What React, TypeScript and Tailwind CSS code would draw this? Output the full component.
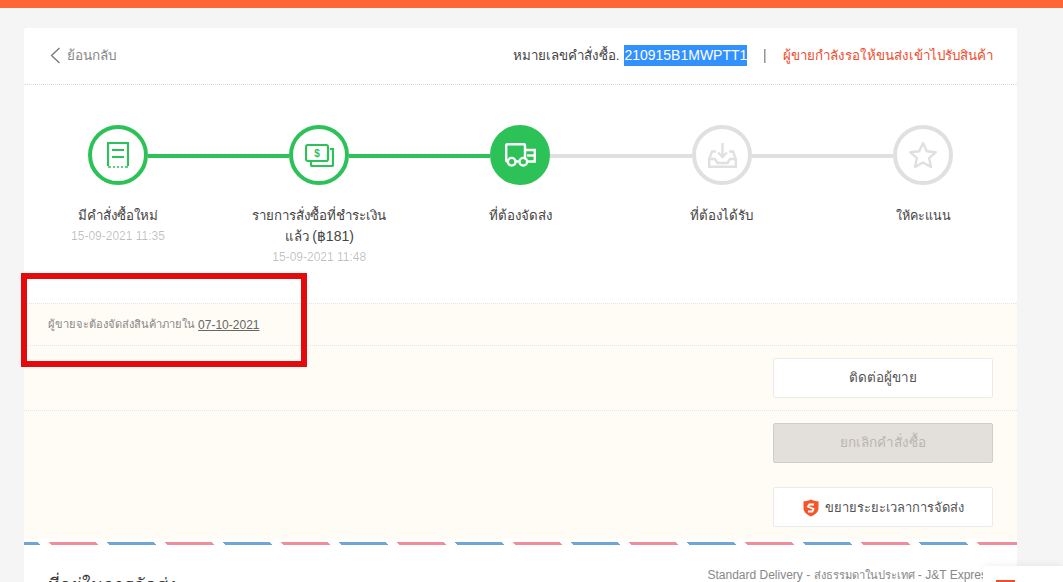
const FONT = "font-['Liberation_Sans','Noto_Sans','DejaVu_Sans',sans-serif]";

const ReceiptIcon = () => (
  <svg width="22" height="26" viewBox="0 0 22 26" fill="none" stroke="#2dc258" strokeWidth="2.200">
    <path d="M1 24V1h20v23" />
    <path d="M1 25h3M6 25h2M10 25h2M14 25h2M18 25h3" strokeWidth="1.600" />
    <path d="M5 8h12M5 15h12" strokeWidth="2.200" />
  </svg>
);

const MoneyIcon = () => (
  <svg width="29" height="23" viewBox="0 0 29 23" fill="none" stroke="#2dc258" strokeWidth="2.200">
    <rect x="1" y="1" width="22" height="16" rx="2" />
    <path d="M25 5h3v16a1 1 0 0 1-1 1H7a1 1 0 0 1-1-1v-3" />
    <text x="12" y="13" fontSize="10" fontWeight="700" fill="#2dc258" stroke="none" textAnchor="middle" fontFamily="Liberation Sans">$</text>
  </svg>
);

const TruckIcon = () => (
  <svg width="31" height="24" viewBox="0 0 31 24" fill="none" stroke="#fff" strokeWidth="2.400">
    <path d="M3 18.500H2.200a1 1 0 0 1-1-1V2.200a1 1 0 0 1 1-1H19a1 1 0 0 1 1 1v14" />
    <path d="M21 7h8.800v11.500H23" />
    <path d="M22 12.500h8" />
    <path d="M10.500 18.500h4" />
    <circle cx="6.700" cy="18.700" r="3.800" />
    <circle cx="18.300" cy="18.700" r="3.800" />
  </svg>
);

const InboxIcon = () => (
  <svg width="29" height="25" viewBox="0 0 29 25" fill="none" stroke="#e0e0e0" strokeWidth="2.400">
    <path d="M14.500 0v14M10 9.500l4.500 4.500L19 9.500" />
    <path d="M8 8.500H4L1.200 16v7.800h26.600V16L25 8.500h-4" />
    <path d="M1.200 16H7l2.500 4h10l2.500-4h5.800" />
  </svg>
);

const StarIcon = () => (
  <svg width="30" height="28" viewBox="0 0 30 28" fill="none" stroke="#e0e0e0" strokeWidth="2.400" strokeLinejoin="round">
    <path d="M15 2l3.800 8.200 9 1-6.700 6 1.900 8.800L15 21.500 7 26l1.900-8.800-6.700-6 9-1z" />
  </svg>
);

const ShieldIcon = () => (
  <svg width="16" height="18" viewBox="0 0 16 18" className="mr-[6px]">
    <path d="M8 .5c2.200 1.200 4.700 1.800 7.500 1.800V9c0 3.800-3.200 6.800-7.500 8.500C3.700 15.800.5 12.800.5 9V2.300C3.300 2.300 5.800 1.700 8 .5z" fill="#f6542b" />
    <path d="M11 5.500H6.300L5 7.500 10.500 10l-1.200 2.500H5" fill="none" stroke="#fff" strokeWidth="1.800" />
  </svg>
);

const Circle = ({ done, filled, children }: { done?: boolean; filled?: boolean; children: React.ReactNode }) => {
  return (
    <div
      className={
        "flex h-[60px] w-[60px] shrink-0 items-center justify-center rounded-full border-4 " +
        (filled ? "border-[#2dc258] bg-[#2dc258]" : done ? "border-[#2dc258] bg-white" : "border-[#e0e0e0] bg-white")
      }
    >
      {children}
    </div>
  );
};

const Line = ({ done, wide }: { done?: boolean; wide?: boolean }) => {
  return (
    <div
      className={
        "h-1 translate-y-[1px] " +
        (wide ? "w-[142px] " : "w-[141px] ") +
        (done ? "bg-[#2dc258]" : "bg-[#e0e0e0]")
      }
    />
  );
};

const Step = ({ title, date }: { title: React.ReactNode; date?: string }) => {
  return (
    <div className="w-[140px] text-center">
      <div className="whitespace-nowrap text-[13.3px] leading-5 text-[#444]">{title}</div>
      {date && <div className="text-[12px] leading-5 text-[rgba(0,0,0,0.26)]">{date}</div>}
    </div>
  );
};

const ActionButton = ({ children, disabled }: { children: React.ReactNode; disabled?: boolean }) => {
  return (
    <button
      className={
        "flex h-10 w-[220px] items-center justify-center rounded-[2px] border pt-[1px] text-[13.5px] " +
        (disabled
          ? "border-[#d1cec8] bg-[#e3e0db] text-[#b8b5b0]"
          : "border-[#ebebeb] bg-white text-[#555]")
      }
    >
      {children}
    </button>
  );
};

export default function App() {
  return (
    <div className={"relative h-[582px] w-[1063px] overflow-hidden bg-[#f5f5f5] " + FONT}>
      <div className="h-2 bg-[#ff6633]" />

      <div className="ml-6 mt-5 w-[993px]">
        <div className="flex h-14 items-center justify-between rounded-[3px] bg-white pl-[26px] pr-6">
          <div className="flex items-center text-[13.5px] text-[#888]">
            <svg width="12" height="18" viewBox="0 0 12 18" fill="none" stroke="#777" strokeWidth="1.300" className="mr-[5px]">
              <path d="M9.500 1 1.500 8.500 9.500 16" />
            </svg>
            <span className="pt-[1px]">ย้อนกลับ</span>
          </div>
          <div className="flex items-center text-[14px]">
            <span className="pt-[1px] text-[13.35px] text-[#444]">หมายเลขคำสั่งซื้อ. </span>
            <span className="ml-[5px] bg-[#3390ff] text-white">210915B1MWPTT1</span>
            <span className="mx-4 text-[#777] [will-change:transform]">|</span>
            <span className="pt-[1px] text-[13.35px] text-[#ee4d2d]">ผู้ขายกำลังรอให้ขนส่งเข้าไปรับสินค้า</span>
          </div>
        </div>

        <div className="h-[219px] rounded-[3px] border-t border-dotted border-[#d8d8d8] bg-white px-6 pt-10">
          <div className="flex items-center px-10">
            <Circle done><ReceiptIcon /></Circle>
            <Line done />
            <Circle done><MoneyIcon /></Circle>
            <Line done />
            <Circle filled><TruckIcon /></Circle>
            <Line wide />
            <Circle><InboxIcon /></Circle>
            <Line />
            <Circle><StarIcon /></Circle>
          </div>
          <div className="mt-[21px] flex justify-between">
            <Step title="มีคำสั่งซื้อใหม่" date="15-09-2021 11:35" />
            <Step
              title={<>รายการสั่งซื้อที่ชำระเงิน<br />แล้ว <span className="text-[14px]">(฿181)</span></>}
              date="15-09-2021 11:48"
            />
            <Step title="ที่ต้องจัดส่ง" />
            <Step title="ที่ต้องได้รับ" />
            <Step title={<span className="text-[12.6px]">ให้คะแนน</span>} />
          </div>
        </div>

        <div className="flex h-[43px] items-center rounded-t-[3px] border-y border-dotted border-[#e5e5e5] bg-[#fffcf5] pl-6 text-[11.1px] text-[#888]">
          ผู้ขายจะต้องจัดส่งสินค้าภายใน&nbsp;<span className="text-[12px] text-[#666] underline">07-10-2021</span>
        </div>

        <div className="bg-[#fffcf5]">
          <div className="flex h-[65px] items-center justify-end border-b border-dotted border-[#e5e5e5] pr-6">
            <ActionButton>ติดต่อผู้ขาย</ActionButton>
          </div>
          <div className="flex flex-col items-end gap-6 pb-3 pr-6 pt-3">
            <ActionButton disabled>ยกเลิกคำสั่งซื้อ</ActionButton>
            <ActionButton><ShieldIcon /><span className="text-[12.9px]">ขยายระยะเวลาการจัดส่ง</span></ActionButton>
          </div>
        </div>

        <div className="bg-white pt-[3px]">
          <div className="h-[3px] bg-[repeating-linear-gradient(45deg,#6fa6d6,#6fa6d6_33px,transparent_0,transparent_41px,#f18d9b_0,#f18d9b_74px,transparent_0,transparent_82px)] bg-[length:116px_3px] bg-[position:-30px_0]" />
          <div className="flex items-start justify-between pl-6 pr-6 pt-[28px]">
            <div className="text-[18px] leading-6 text-[rgba(0,0,0,0.8)]">ที่อยู่ในการจัดส่ง</div>
            <div className="-mt-[7px] whitespace-nowrap text-[12px] text-[#888]">
              Standard Delivery - <span className="text-[11.15px]">ส่งธรรมดาในประเทศ</span> - J&amp;T Express
            </div>
          </div>
        </div>
      </div>

      {/* chat box floating on the corner */}
      <div className="absolute left-[983px] top-[566px] h-10 w-20 rounded-tl-[4px] bg-white shadow-[0_0_8px_rgba(0,0,0,0.08)]">
        <div className="ml-[13px] mt-[14px] h-4 w-[19px] bg-[#ee4d2d]" />
      </div>

      {/* red marker drawn over the screenshot */}
      <div className="absolute left-[21px] top-[273px] h-[94px] w-[286px] border-[6px] border-[#e30b0b]" />
    </div>
  );
}
